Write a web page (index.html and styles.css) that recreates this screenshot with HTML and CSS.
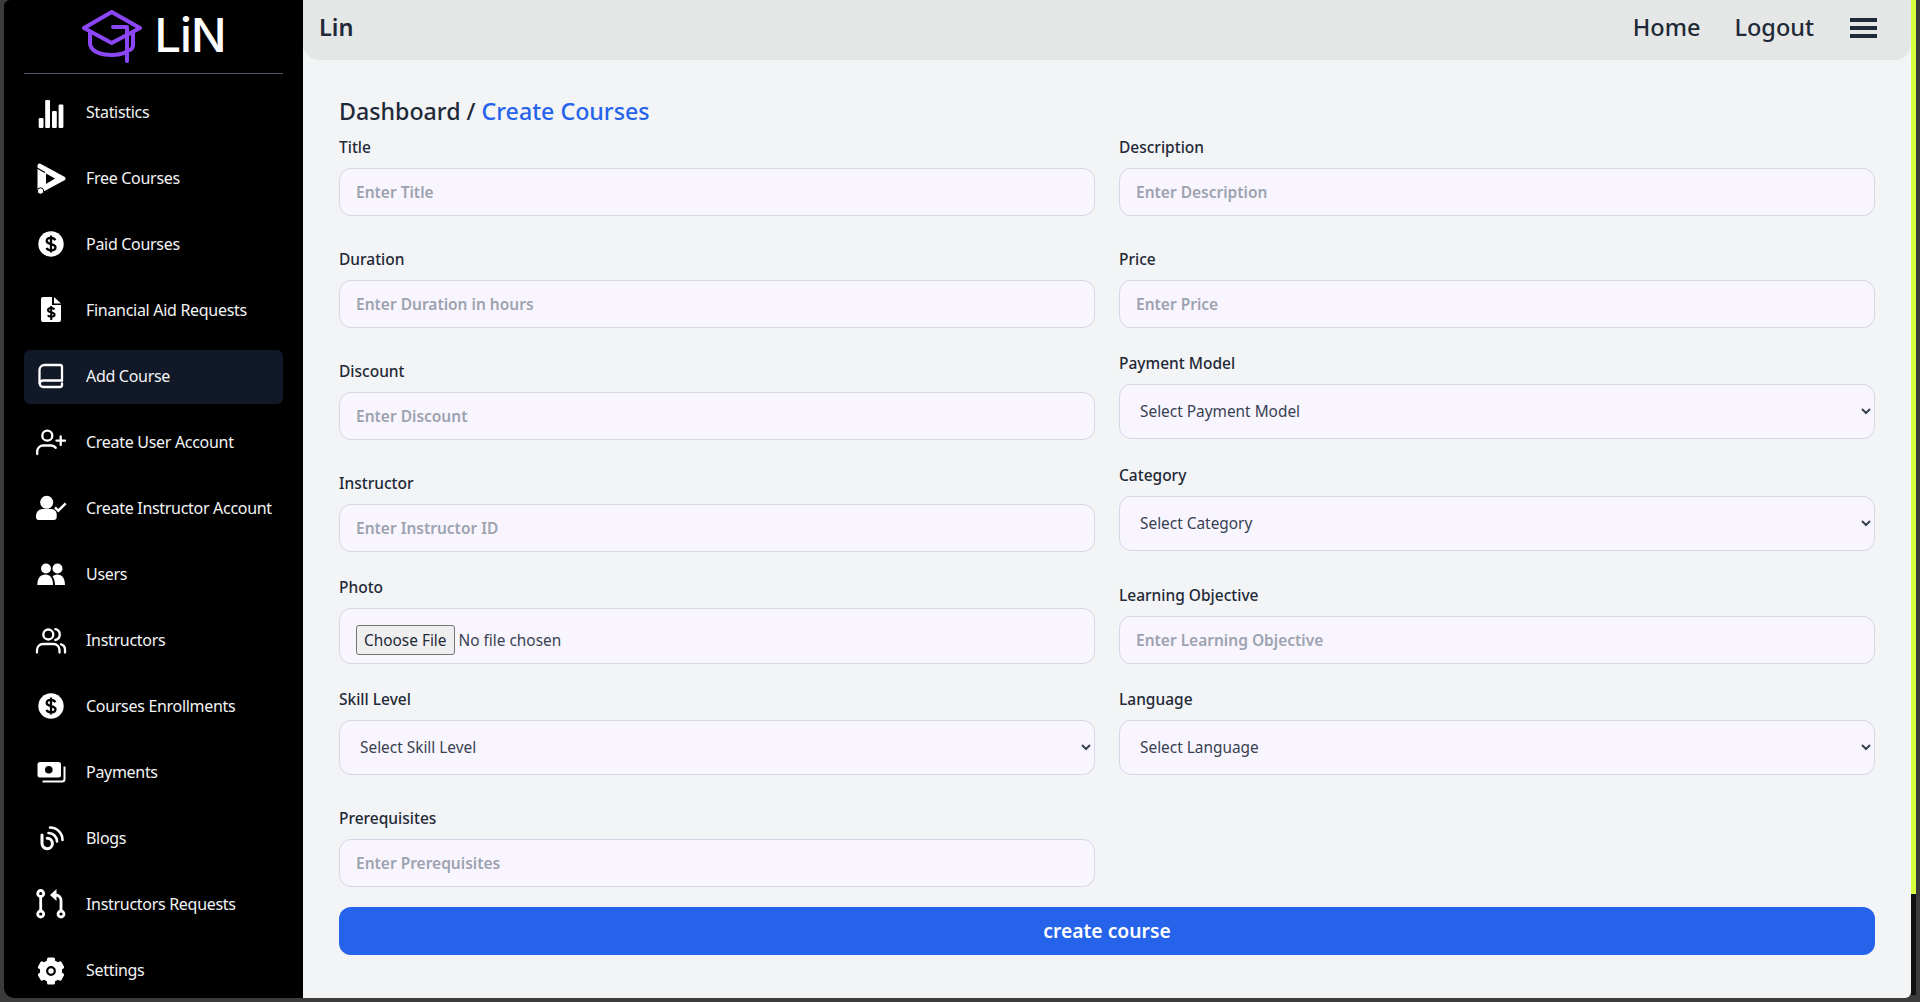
FILE: index.html
```html
<!DOCTYPE html>
<html lang="en">
<head>
  <meta charset="UTF-8">
  <meta name="viewport" content="width=device-width, initial-scale=1.0">
  <title>Lin</title>
  <link rel="stylesheet" href="styles.css">
</head>
<body>
  <div class="app">
    <aside class="sidebar">
      <div class="brand">
        <svg class="brand-icon" viewBox="0 0 60 53" fill="none" stroke="#8b46f6" stroke-width="4" stroke-linecap="round" stroke-linejoin="round">
          <path d="M29.7 2 58 18 29.7 33 2 18Z"/>
          <path d="M8 22v11c0 8 10 12 22 12 5 0 10-1 14-3"/>
          <path d="M31 17h14v34"/>
          <path d="M51 22v13c0 2-1 4-3 5"/>
        </svg>
        <span class="brand-name">LiN</span>
      </div>
      <nav class="side-nav">
        <a class="side-link">
          <svg class="side-icon" viewBox="0 0 32 32" fill="#fff"><rect x="3.7" y="22" width="4.8" height="10" rx="1.2"/><rect x="10.2" y="4" width="4.8" height="28" rx="1.2"/><rect x="17" y="15" width="4.8" height="17" rx="1.2"/><rect x="23.6" y="8.5" width="4.8" height="23.5" rx="1.2"/></svg>
          <span>Statistics</span>
        </a>
        <a class="side-link">
          <svg class="side-icon" viewBox="0 0 32 32"><path fill="#fff" stroke="#fff" stroke-width="4" stroke-linejoin="round" d="M4.500 3.500 28.500 16.500 4.500 29.500Z"/><path d="M11 11.500 20 16.500 11 22Z" fill="#000"/><path d="M2 6 10 10.500" stroke="#000" stroke-width="1.200" fill="none"/><circle cx="5.500" cy="29" r="3.200" fill="#fff" stroke="#000" stroke-width="1"/></svg>
          <span>Free Courses</span>
        </a>
        <a class="side-link">
          <svg class="side-icon" viewBox="0 0 32 32"><circle cx="16" cy="16" r="12.700" fill="#fff"/><path d="M20.300 12.200c-.7-1.600-2.300-2.400-4.300-2.400-2.500 0-4.300 1.200-4.300 3.100 0 4.300 8.800 2 8.800 6.300 0 2-1.900 3.100-4.500 3.100-2.100 0-3.700-.8-4.500-2.400M16 7.500v17" fill="none" stroke="#000" stroke-width="2.300"/></svg>
          <span>Paid Courses</span>
        </a>
        <a class="side-link">
          <svg class="side-icon" viewBox="0 0 32 32"><path d="M8 3h9v8h9v15a2 2 0 0 1-2 2H8a2 2 0 0 1-2-2V5a2 2 0 0 1 2-2z" fill="#fff"/><path d="M19 3l7 6.500h-7z" fill="#fff"/><path d="M19.500 15.500c-.6-1-1.900-1.400-3.300-1.400-1.900 0-3.200.8-3.200 2.200 0 2.900 6.600 1.400 6.600 4.300 0 1.400-1.400 2.200-3.400 2.200-1.500 0-2.800-.5-3.400-1.600M16.200 12v14" fill="none" stroke="#000" stroke-width="2"/></svg>
          <span>Financial Aid Requests</span>
        </a>
        <a class="side-link active">
          <svg class="side-icon" viewBox="0 0 32 32" fill="none" stroke="#fff" stroke-width="2.300" stroke-linecap="round"><path d="M4.500 23.500V10a5 5 0 0 1 5-5H25a2 2 0 0 1 2 2v13.500H8a3.250 3.250 0 0 0 0 6.500h17a2 2 0 0 0 2-2v-1.500"/></svg>
          <span>Add Course</span>
        </a>
        <a class="side-link">
          <svg class="side-icon" viewBox="0 0 32 32" fill="none" stroke="#fff" stroke-width="2.300" stroke-linecap="round"><circle cx="12.300" cy="9.700" r="5"/><path d="M2.200 28v-2.500a6 6 0 0 1 6-6h8a6 6 0 0 1 4.500 2.300M25.700 10.500v8.500M21.500 14.700H30"/></svg>
          <span>Create User Account</span>
        </a>
        <a class="side-link">
          <svg class="side-icon" viewBox="0 0 32 32"><circle cx="11.700" cy="10.300" r="6.500" fill="#fff"/><path d="M1 25v-1.500A6.500 6.500 0 0 1 7.500 17h8.500a6 6 0 0 1 5.700 4.500V25a3 3 0 0 1-3 3H3.500A2.500 2.500 0 0 1 1 25z" fill="#fff"/><path d="M20 15.300l3.300 3.400 7.400-7.400" fill="none" stroke="#fff" stroke-width="2.400"/></svg>
          <span>Create Instructor Account</span>
        </a>
        <a class="side-link">
          <svg class="side-icon" viewBox="0 0 32 32" fill="#fff"><circle cx="11" cy="10.500" r="5"/><circle cx="22.500" cy="10.500" r="5"/><path d="M2.300 27c0-6.500 3-10.500 8-10.500s7.700 4 7.700 10.500z"/><path d="M20 27c0-3.500-.8-6.500-2.500-8.500 1.200-1.300 2.800-2 4.700-2 5 0 7.800 4 7.800 10.500z"/></svg>
          <span>Users</span>
        </a>
        <a class="side-link">
          <svg class="side-icon" viewBox="0 0 32 32" fill="none" stroke="#fff" stroke-width="2.300" stroke-linecap="round"><circle cx="13.300" cy="10.500" r="5"/><path d="M20.300 5.200a5.500 5.500 0 0 1 0 10.800"/><path d="M2 28.500V26a6 6 0 0 1 6-6h10.500a6 6 0 0 1 6 6v2.500"/><path d="M26 20.300a5.500 5.500 0 0 1 4 5.400v2.800"/></svg>
          <span>Instructors</span>
        </a>
        <a class="side-link">
          <svg class="side-icon" viewBox="0 0 32 32"><circle cx="16" cy="16" r="12.700" fill="#fff"/><path d="M20.300 12.200c-.7-1.600-2.300-2.400-4.300-2.400-2.500 0-4.300 1.200-4.300 3.100 0 4.300 8.800 2 8.800 6.300 0 2-1.900 3.100-4.500 3.100-2.100 0-3.700-.8-4.500-2.400M16 7.500v17" fill="none" stroke="#000" stroke-width="2.300"/></svg>
          <span>Courses Enrollments</span>
        </a>
        <a class="side-link">
          <svg class="side-icon" viewBox="0 0 32 32"><rect x="2.500" y="6" width="23.500" height="15.500" rx="2.500" fill="#fff"/><circle cx="13.800" cy="13.700" r="3.800" fill="#000"/><path d="M7.500 25.500H27a2.500 2.500 0 0 0 2.500-2.500V10.500" fill="none" stroke="#fff" stroke-width="2"/></svg>
          <span>Payments</span>
        </a>
        <a class="side-link">
          <svg class="side-icon" viewBox="0 0 32 32" fill="none" stroke="#fff" stroke-width="3" stroke-linecap="round"><path d="M7 13v8.500a5.200 5.200 0 1 0 5.200-5.200"/><path d="M13.500 11a8.500 8.500 0 0 1 8.500 8.500" stroke-width="2.600"/><path d="M15 5.500a12.500 12.500 0 0 1 12.500 12.500" stroke-width="2.600"/></svg>
          <span>Blogs</span>
        </a>
        <a class="side-link">
          <svg class="side-icon" viewBox="0 0 32 32" fill="none" stroke="#fff" stroke-width="2.800"><circle cx="5.700" cy="5.500" r="3"/><circle cx="5.700" cy="26" r="3"/><circle cx="26" cy="26" r="3"/><path d="M5.700 8.500v14.500M26 23V12.500a5.500 5.500 0 0 0-5.500-5.500H19"/><path d="M21.500 1v12L15 7z" fill="#fff" stroke="none"/></svg>
          <span>Instructors Requests</span>
        </a>
        <a class="side-link">
          <svg class="side-icon" viewBox="0 0 32 32"><g fill="#fff"><circle cx="16" cy="17" r="11"/><rect x="12" y="3.500" width="8" height="27" rx="1.500"/><rect x="12" y="3.500" width="8" height="27" rx="1.500" transform="rotate(60 16 17)"/><rect x="12" y="3.500" width="8" height="27" rx="1.500" transform="rotate(120 16 17)"/></g><circle cx="16" cy="17" r="3.800" fill="#fff" stroke="#000" stroke-width="2.200"/></svg>
          <span>Settings</span>
        </a>
      </nav>
    </aside>

    <div class="main">
      <header class="topbar">
        <span class="topbar-title">Lin</span>
        <div class="topbar-links">
          <a>Home</a>
          <a>Logout</a>
          <div class="burger"><i></i><i></i><i></i></div>
        </div>
      </header>

      <section class="content">
        <h1 class="crumbs">Dashboard / <span>Create Courses</span></h1>
        <form class="form-grid">
          <div class="field"><label>Title</label><input class="control" type="text" placeholder="Enter Title"></div>
          <div class="field"><label>Description</label><input class="control" type="text" placeholder="Enter Description"></div>

          <div class="field"><label>Duration</label><input class="control" type="text" placeholder="Enter Duration in hours"></div>
          <div class="field"><label>Price</label><input class="control" type="text" placeholder="Enter Price"></div>

          <div class="field"><label>Discount</label><input class="control" type="text" placeholder="Enter Discount"></div>
          <div class="field"><label>Payment Model</label><select class="control pick"><option>Select Payment Model</option></select></div>

          <div class="field"><label>Instructor</label><input class="control" type="text" placeholder="Enter Instructor ID"></div>
          <div class="field"><label>Category</label><select class="control pick"><option>Select Category</option></select></div>

          <div class="field"><label>Photo</label><input class="control pick-file" type="file"></div>
          <div class="field"><label>Learning Objective</label><input class="control" type="text" placeholder="Enter Learning Objective"></div>

          <div class="field"><label>Skill Level</label><select class="control pick"><option>Select Skill Level</option></select></div>
          <div class="field"><label>Language</label><select class="control pick"><option>Select Language</option></select></div>

          <div class="field last-field"><label>Prerequisites</label><input class="control" type="text" placeholder="Enter Prerequisites"></div>
        </form>
        <button class="submit" type="button">create course</button>
      </section>
    </div>

    <div class="scroll-track"><div class="scroll-thumb"></div></div>
  </div>
</body>
</html>
```

FILE: styles.css
```css
* {
  box-sizing: border-box;
}

html,
body {
  margin: 0;
  height: 100%;
  overflow: hidden;
}

body {
  background-color: #3c3c3c;
  color: #1f2937;
  font-family: "Noto Sans", sans-serif;
}

.app {
  display: flex;
  height: 998px;
  padding-left: 4px;
  padding-right: 4px;
}

/* Sidebar */
.sidebar {
  width: 299px;
  flex-shrink: 0;
  background-color: #000;
  border-radius: 6px 0 0 10px;
  padding: 0 20px;
  overflow: hidden;
}

.brand {
  height: 74px;
  display: flex;
  align-items: flex-start;
  justify-content: center;
  gap: 13px;
  border-bottom: 1px solid #4b5563;
  padding-top: 10px;
}

.brand-icon {
  width: 60px;
  height: 53px;
}

.brand-name {
  color: #fff;
  font-family: Inter, sans-serif;
  font-size: 47px;
  font-weight: 500;
  line-height: 38px;
  letter-spacing: -1px;
  margin-top: 6px;
}

.side-nav {
  display: flex;
  flex-direction: column;
  gap: 12px;
  padding-top: 12px;
}

.side-link {
  height: 54px;
  display: flex;
  align-items: center;
  gap: 19px;
  padding: 0 0 2px 11px;
  border-radius: 6px;
  color: #f3f4f6;
  font-size: 16px;
  letter-spacing: -0.3px;
}

.side-link.active {
  background-color: #111827;
}

.side-icon {
  width: 32px;
  height: 32px;
  flex-shrink: 0;
}

/* Main area */
.main {
  flex: 1;
  min-width: 0;
  background-color: #f3f4f6;
  border-radius: 0 0 6px 0;
}

.topbar {
  height: 60px;
  background-color: #e5e7e6;
  border-radius: 0 0 16px 16px;
  display: flex;
  align-items: center;
  justify-content: space-between;
  padding: 0 34px 6px 16px;
  font-size: 23.5px;
  font-weight: 500;
}

.topbar-title {
  font-weight: 600;
}

.topbar-links {
  display: flex;
  align-items: center;
  gap: 34px;
}

.burger {
  width: 27px;
  display: flex;
  flex-direction: column;
  gap: 4px;
  margin: 2px 0 0 2px;
}

.burger i {
  display: block;
  height: 4px;
  background-color: #1f2937;
}

.content {
  padding: 35px 36px 0;
}

.crumbs {
  margin: 0;
  font-size: 23.2px;
  font-weight: 500;
  line-height: 32px;
  height: 41px;
}

.crumbs span {
  color: #2563eb;
}

.form-grid {
  display: grid;
  grid-template-columns: 1fr 1fr;
  grid-auto-rows: 80px;
  column-gap: 24px;
  row-gap: 32px;
  align-items: end;
}

.field {
  display: flex;
  flex-direction: column;
}

.last-field {
  margin-bottom: 1px;
}

.field label {
  font-size: 15.5px;
  font-weight: 500;
  line-height: 24px;
  margin-bottom: 9px;
}

.control {
  width: 100%;
  height: 48px;
  padding: 0 16px;
  background-color: #f9f5ff;
  border: 1px solid #d5d6e6;
  border-radius: 12px;
  font-family: "Noto Sans", sans-serif;
  font-size: 15.4px;
  color: #374151;
  outline: none;
}

.control::placeholder {
  color: #9ca3af;
  font-size: 15.5px;
  font-weight: 600;
}

.pick {
  height: 55px;
  margin-bottom: 1px;
}

.pick-file {
  height: 56px;
  padding: 16px 16px 8px;
}

.pick-file::file-selector-button {
  height: 30px;
  margin-right: 4px;
  padding: 0 7px;
  background-color: #efefef;
  border: 1px solid #767676;
  border-radius: 3px;
  color: #1f2937;
  font-family: "Noto Sans", sans-serif;
  font-size: 15.4px;
}

.submit {
  display: block;
  width: 100%;
  height: 48px;
  margin-top: 19px;
  padding-bottom: 3px;
  background-color: #2563eb;
  color: #fff;
  border: none;
  border-radius: 12px;
  font-family: "Noto Sans", sans-serif;
  font-size: 19.3px;
  font-weight: 600;
}

/* Fake page scrollbar at the right edge */
.scroll-track {
  width: 5px;
  flex-shrink: 0;
  background-color: #111;
  height: 995px;
}

.scroll-thumb {
  height: 894px;
  background-color: #d4ff3f;
}
```
